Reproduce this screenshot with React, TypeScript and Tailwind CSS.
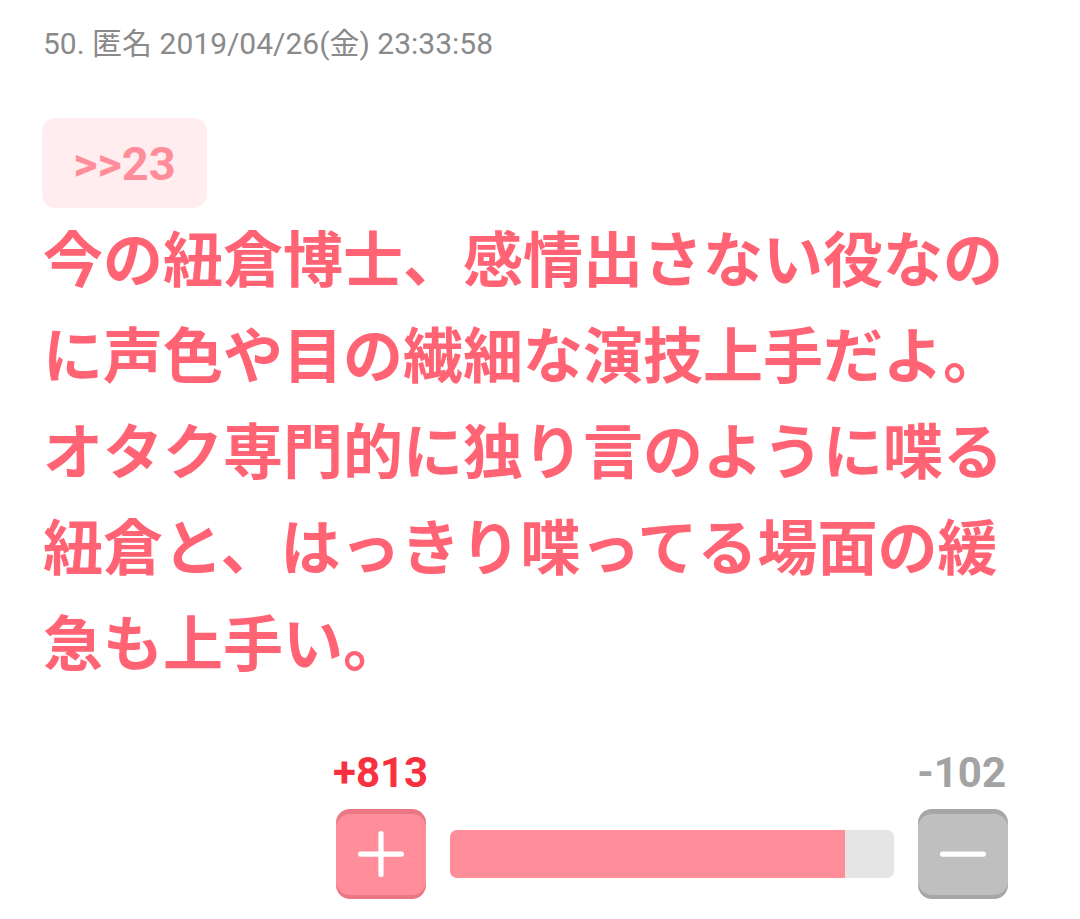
import { Plus, Minus } from 'lucide-react';

const post = {
  no: 50,
  name: '匿名',
  date: '2019/04/26(金) 23:33:58',
  anchor: '>>23',
  body: '今の紐倉博士、感情出さない役なのに声色や目の繊細な演技上手だよ。オタク専門的に独り言のように喋る紐倉と、はっきり喋ってる場面の緩急も上手い。',
  good: 813,
  bad: 102,
};

function VoteBar({ good, bad }: { good: number; bad: number }) {
  const ratio = (good / (good + bad)) * 100;

  return (
    <div className="ml-auto mr-[29px] w-[672px]">
      {/* Counts */}
      <div className="flex items-start justify-between font-['Roboto',sans-serif] text-[42px] font-bold leading-[50px]">
        <span className="text-[#f9303f] -ml-[3px]">+{good}</span>
        <span className="text-[#a3a3a3] mr-[2px]">-{bad}</span>
      </div>

      {/* Buttons + bar */}
      <div className="mt-[11px] flex items-center">
        <button className="h-[90px] w-[90px] rounded-[14px] bg-[#e97884]">
          <span className="flex h-[81px] w-full items-center justify-center rounded-[14px] bg-[#ff8d9a]">
            <Plus className="h-[70px] w-[70px] text-white" strokeWidth={1.8} />
          </span>
        </button>

        <div className="mx-[24px] h-[48px] flex-1 overflow-hidden rounded-[7px] bg-[#e5e5e5]">
          <div className="h-full bg-[#ff8d9a]" style={{ width: `${ratio}%` }} />
        </div>

        <button className="h-[90px] w-[90px] rounded-[14px] bg-[#a6a6a6]">
          <span className="flex h-[81px] w-full items-center justify-center rounded-[14px] bg-[#bfbfbf]">
            <Minus className="h-[70px] w-[70px] text-white" strokeWidth={1.8} />
          </span>
        </button>
      </div>
    </div>
  );
}

export default function App() {
  return (
    <div className="min-h-[919px] w-[1080px] bg-white px-[43px] pt-[24px]">
      {/* Post header */}
      <div className="font-['Roboto','Noto_Sans_CJK_JP',sans-serif] text-[30px] leading-[40px] text-[#8a8a8a]">
        {post.no}. {post.name} {post.date}
      </div>

      {/* Anchor */}
      <div className="mt-[54px] -ml-px flex h-[90px] w-[165px] items-center justify-center rounded-[14px] bg-[#ffedf0]">
        <span className="font-['Roboto',sans-serif] text-[47px] font-bold leading-none text-[#ff8d9a]">
          {post.anchor}
        </span>
      </div>

      {/* Body */}
      <p className="font-['Noto_Sans_CJK_JP',sans-serif] text-[60px] font-bold leading-[96px] text-[#ff6374]">
        {post.body}
      </p>

      <div className="mt-[60px]">
        <VoteBar good={post.good} bad={post.bad} />
      </div>
    </div>
  );
}
